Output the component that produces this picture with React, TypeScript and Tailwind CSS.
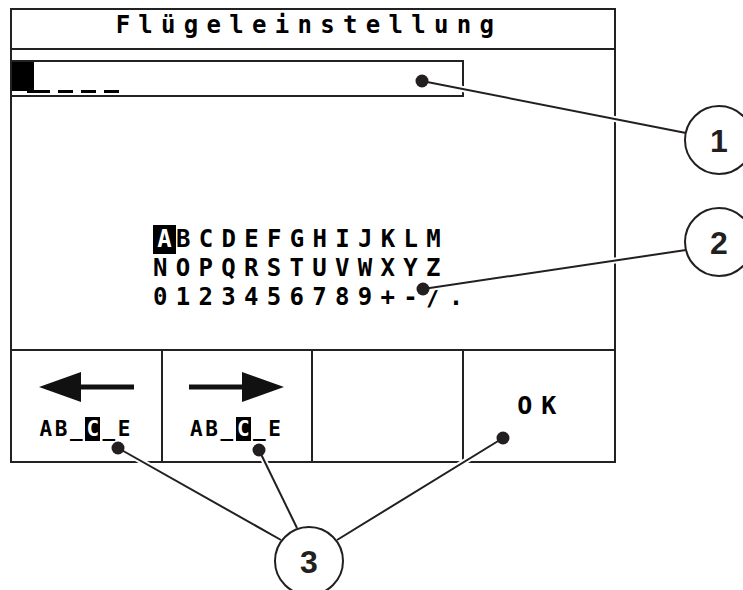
const mono = "font-['DejaVu_Sans_Mono',monospace] font-bold";

function Arrow({ dir }: { dir: "left" | "right" }) {
  return (
    <svg width="95" height="30" viewBox="0 0 95 30" className={dir === "right" ? "-scale-x-100" : ""}>
      <polygon points="0,15 42,0 42,30" fill="#111" />
      <rect x="40" y="12.5" width="55" height="5" fill="#111" />
    </svg>
  );
}

function KeyLabel() {
  return (
    <div className={`${mono} text-[21px] leading-[24px] tracking-[2.7px] text-black flex`}>
      <span>AB_</span>
      <span className="bg-black text-white w-[15px] tracking-normal text-center">C</span>
      <span className="ml-[2px]">_E</span>
    </div>
  );
}

function Callouts() {
  const line = (x1: number, y1: number, x2: number, y2: number) => (
    <g>
      <line x1={x1} y1={y1} x2={x2} y2={y2} stroke="#fff" strokeWidth="6" />
      <line x1={x1} y1={y1} x2={x2} y2={y2} stroke="#231f20" strokeWidth="2" />
    </g>
  );
  const badge = (cx: number, cy: number, n: string) => (
    <g>
      <circle cx={cx} cy={cy} r="34" fill="#fff" stroke="#231f20" strokeWidth="2" />
      <text
        x={cx}
        y={cy + 11.5}
        textAnchor="middle"
        fontFamily="'Liberation Sans', Arial, sans-serif"
        fontWeight="bold"
        fontSize="32"
        fill="#231f20"
      >
        {n}
      </text>
    </g>
  );
  const dot = (cx: number, cy: number) => <circle cx={cx} cy={cy} r="6.5" fill="#231f20" />;

  return (
    <svg className="absolute inset-0 pointer-events-none" width="743" height="590" viewBox="0 0 743 590">
      {line(422, 81, 686, 133)}
      {line(423, 289, 686, 250)}
      {line(118, 448, 281, 540)}
      {line(259, 450, 297, 528)}
      {line(503, 438, 337, 540)}
      {dot(422, 81)}
      {dot(423, 289)}
      {dot(118, 448)}
      {dot(259, 450)}
      {dot(503, 438)}
      {badge(719, 140, "1")}
      {badge(719, 242, "2")}
      {badge(309, 561, "3")}
    </svg>
  );
}

export default function App() {
  return (
    <div className="relative w-[743px] h-[590px] bg-white overflow-hidden">
      <div className="ml-[10px] mt-[8px] w-[606px] h-[455px] border-2 border-[#222] flex flex-col">
        {/* title */}
        <div className="h-[40px] border-b-2 border-[#222] flex justify-center items-start pt-[2px]">
          <span className={`${mono} text-[24px] leading-[27px] tracking-[8.3px] -ml-[8px] text-black`}>
            Flügeleinstellung
          </span>
        </div>

        {/* body */}
        <div className="h-[299px] flex flex-col">
          <div className="mt-[10px] w-[452px] h-[37px] border-t-2 border-r-2 border-b-2 border-[#222] flex">
            <div className="w-[22px] h-[29px] bg-black" />
            <div className="flex items-end gap-[8px] pb-[2px] -ml-[7px]">
              <div className="w-[23px] h-[3px] bg-black" />
              <div className="w-[15px] h-[3px] bg-black" />
              <div className="w-[15px] h-[3px] bg-black" />
              <div className="w-[15px] h-[3px] bg-black" />
            </div>
          </div>

          <div className={`${mono} ml-[141px] mt-[128px] text-[24px] leading-[29px] tracking-[8.3px] text-black`}>
            <div className="flex">
              <span className="inline-block w-[23px] bg-black text-white text-center tracking-normal">A</span>
              <span>BCDEFGHIJKLM</span>
            </div>
            <div>NOPQRSTUVWXYZ</div>
            <div>0123456789+-/.</div>
          </div>
        </div>

        {/* softkeys */}
        <div className="h-[112px] border-t-2 border-[#222] grid grid-cols-4">
          <div className="border-r-2 border-[#222] flex flex-col items-center pt-[21px] gap-[15px]">
            <Arrow dir="left" />
            <KeyLabel />
          </div>
          <div className="border-r-2 border-[#222] flex flex-col items-center pt-[21px] gap-[15px]">
            <Arrow dir="right" />
            <KeyLabel />
          </div>
          <div className="border-r-2 border-[#222]" />
          <div className="flex items-center justify-center">
            <span className={`${mono} text-[25px] tracking-[9px] -mr-[5px] text-black`}>OK</span>
          </div>
        </div>
      </div>
      <Callouts />
    </div>
  );
}
